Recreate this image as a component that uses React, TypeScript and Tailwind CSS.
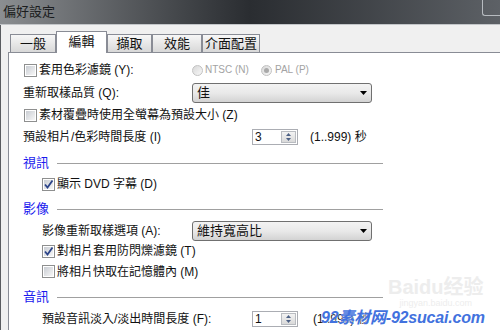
import React from "react";

const font = "font-['Liberation_Sans','Noto_Sans_CJK_TC',sans-serif]";

function Checkbox({ checked }: { checked?: boolean }) {
  return (
    <span className="relative flex h-[13px] w-[13px] shrink-0 items-center justify-center border border-[#8e8f8f] bg-white">
      <span className="h-[9px] w-[9px] bg-gradient-to-br from-[#c9cdd3] to-[#f7f7f7]" />
      {checked && (
        <svg className="absolute left-0 top-0" width="11" height="11" viewBox="0 0 11 11">
          <path d="M2 5.5 L4.5 8.5 L9.5 1.5" fill="none" stroke="#2c4489" strokeWidth="1.8" />
        </svg>
      )}
    </span>
  );
}

function Radio({ selected }: { selected?: boolean }) {
  return (
    <span className="flex h-[11px] w-[11px] shrink-0 items-center justify-center rounded-full border border-[#c2c2c2] bg-gradient-to-br from-[#d8d8d8] to-[#f8f8f8]">
      {selected && <span className="h-[5px] w-[5px] rounded-full bg-[#a9a9a9]" />}
    </span>
  );
}

function Dropdown({ value }: { value: string }) {
  return (
    <div className="flex h-[20px] w-[180px] shrink-0 items-center justify-between rounded-[3px] border border-[#707070] bg-gradient-to-b from-[#f3f3f3] via-[#e9e9e9] to-[#d3d3d3] pl-[4px] pr-[4px]">
      <span className="text-[13px] leading-[14px]">{value}</span>
      <svg width="7" height="4" viewBox="0 0 7 4">
        <path d="M0 0 H7 L3.5 4 Z" fill="#000" />
      </svg>
    </div>
  );
}

function Spinner({ value }: { value: string }) {
  return (
    <div className="flex h-[16px] w-[46px] shrink-0 border border-[#abadb3] bg-white">
      <span className="flex-1 pl-[2px] text-[12px] leading-[14px]">{value}</span>
      <div className="my-[1px] mr-[1px] flex w-[15px] flex-col items-center justify-center gap-[2px] border border-[#b9bcc1] bg-gradient-to-b from-[#f3f3f3] to-[#dadada]">
        <svg width="5" height="3" viewBox="0 0 5 3"><path d="M0 3 L2.5 0 L5 3 Z" fill="#4d6185" /></svg>
        <svg width="5" height="3" viewBox="0 0 5 3"><path d="M0 0 H5 L2.5 3 Z" fill="#4d6185" /></svg>
      </div>
    </div>
  );
}

function Section({ title, className }: { title: string; className: string }) {
  return (
    <div className={`flex items-center pl-[14px] ${className}`}>
      <span className="w-[34px] text-[13px] leading-[14px] text-[#1a1aee]">{title}</span>
      <span className="h-px w-[326px] bg-[#a0a0a0]" />
    </div>
  );
}

const tabs = [
  { label: "一般", w: "w-[46px]" },
  { label: "編輯", w: "w-[51px]", active: true },
  { label: "擷取", w: "w-[45px]" },
  { label: "效能", w: "w-[50px]" },
  { label: "介面配置", w: "w-[58px]" },
];

export default function App() {
  return (
    <div className={`relative flex h-[330px] w-[500px] flex-col overflow-hidden bg-[#f0f0f0] text-[#111] ${font}`}>
      {/* title bar */}
      <div className="flex h-[24px] shrink-0 items-start justify-between bg-gradient-to-r from-[#8b8e91] via-[#2a2d31] to-[#5d6166]">
        <span className="pl-[3px] pt-[4px] text-[13px] leading-[15px] text-[#1b1d20]">偏好設定</span>
        <span className="h-[16px] w-[18px] rounded-bl-[3px] border-b border-l border-[#b7bbc0]" />
      </div>
      <div className="h-px shrink-0 bg-[#c3c6c9]" />

      <div className="flex flex-1 flex-col border-l border-[#5a5c60]">
        {/* tabs */}
        <div className="flex h-[27px] shrink-0 items-end pl-[9px]">
          {tabs.map((t) =>
            t.active ? (
              <div
                key={t.label}
                className={`relative z-10 -mb-px flex h-[22px] ${t.w} justify-center border-x border-t border-[#898c95] bg-white pt-[2px] text-[13px] leading-[15px]`}
              >
                {t.label}
              </div>
            ) : (
              <div
                key={t.label}
                className={`flex h-[18px] ${t.w} items-center justify-center border-x border-t border-[#898c95] bg-gradient-to-b from-[#f7f7f7] to-[#d8d8d8] text-[13px] leading-[15px]`}
              >
                {t.label}
              </div>
            )
          )}
        </div>

        {/* tab page */}
        <div className="ml-[7px] flex flex-1 flex-col border-l border-t border-[#898c95] bg-white pt-[6px] text-[12px] leading-[14px]">
          <div className="flex h-[22px] items-center pl-[15px]">
            <div className="flex w-[168px] items-center gap-[2px]">
              <Checkbox />
              <span>套用色彩濾鏡 (Y):</span>
            </div>
            <div className="flex w-[69px] items-center gap-[2px] text-[#a3a3a3]">
              <Radio />
              <span className="text-[10px]">NTSC (N)</span>
            </div>
            <div className="flex items-center gap-[3px] text-[#a3a3a3]">
              <Radio selected />
              <span className="text-[10px]">PAL (P)</span>
            </div>
          </div>

          <div className="flex h-[24px] items-center pl-[14px]">
            <span className="w-[169px]">重新取樣品質 (Q):</span>
            <Dropdown value="佳" />
          </div>

          <div className="flex h-[20px] items-center gap-[2px] pl-[15px]">
            <Checkbox />
            <span>素材覆疊時使用全螢幕為預設大小 (Z)</span>
          </div>

          <div className="flex h-[24px] items-center pl-[14px]">
            <span className="w-[229px]">預設相片/色彩時間長度 (I)</span>
            <Spinner value="3" />
            <span className="ml-[12px]">(1..999) 秒</span>
          </div>

          <Section title="視訊" className="h-[28px]" />

          <div className="flex h-[14px] items-center gap-[2px] pl-[33px]">
            <Checkbox checked />
            <span>顯示 DVD 字幕 (D)</span>
          </div>

          <Section title="影像" className="h-[30px] pt-[6px]" />

          <div className="flex h-[20px] items-center pl-[33px]">
            <span className="w-[150px]">影像重新取樣選項 (A):</span>
            <Dropdown value="維持寬高比" />
          </div>

          <div className="flex h-[20px] items-center gap-[2px] pl-[33px]">
            <Checkbox checked />
            <span>對相片套用防閃爍濾鏡 (T)</span>
          </div>

          <div className="flex h-[21px] items-center gap-[2px] pl-[33px]">
            <Checkbox />
            <span>將相片快取在記憶體內 (M)</span>
          </div>

          <Section title="音訊" className="h-[30px]" />

          <div className="flex h-[14px] items-center pl-[33px]">
            <span className="w-[210px]">預設音訊淡入/淡出時間長度 (F):</span>
            <Spinner value="1" />
            <span className="ml-[15px]">(1..999) 秒</span>
          </div>
        </div>
      </div>

      {/* watermarks */}
      <div className="pointer-events-none absolute left-[388px] top-[276px] flex flex-col items-center whitespace-nowrap text-[#ededed]">
        <span className="text-[20px] font-bold leading-[22px]">Baidu经验</span>
        <span className="text-[9px] leading-[11px]">jingyan.baidu.com</span>
      </div>
      <span className="pointer-events-none absolute left-[321px] top-[307px] whitespace-nowrap text-[16px] font-bold italic leading-[22px] tracking-[-0.2px] text-[#4272de] [text-shadow:0_0_2px_#fff]">
        92素材网-92sucai.com
      </span>
    </div>
  );
}
